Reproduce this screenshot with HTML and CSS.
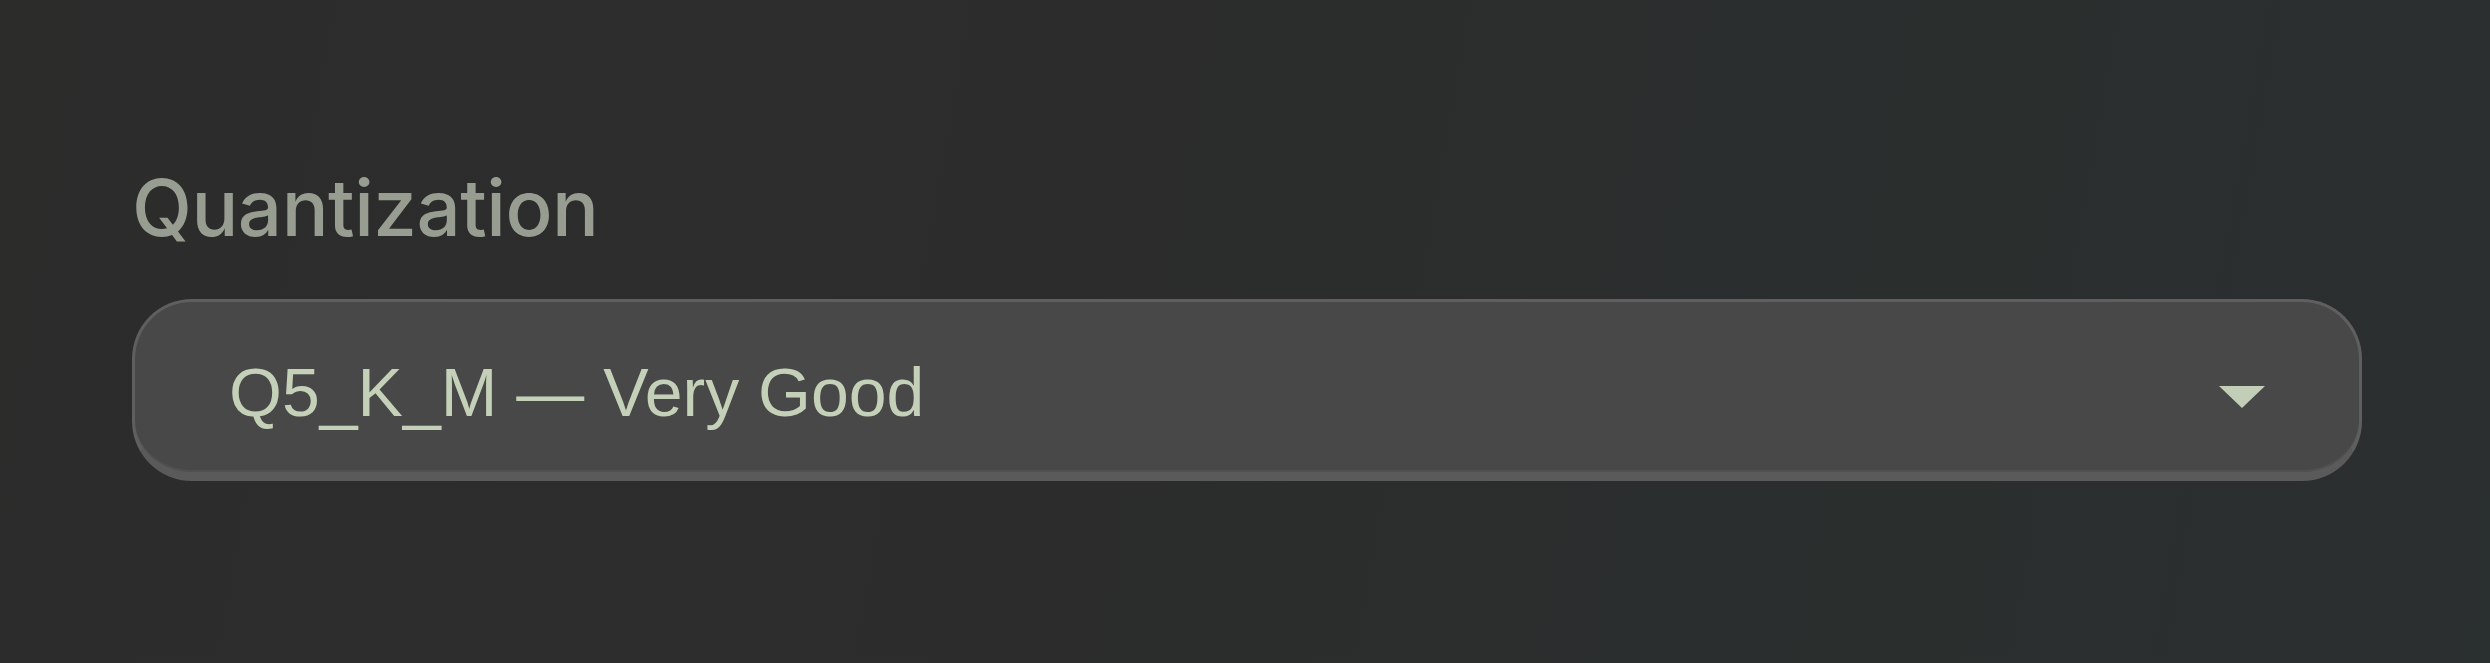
FILE: index.html
```html
<!DOCTYPE html>
<html lang="en">
<head>
  <meta charset="UTF-8" />
  <title>Quantization</title>
  <link rel="stylesheet" href="styles.css">
</head>
<body>
  <div class="field">
    <label class="field-label" for="quant">Quantization</label>
    <div class="select">
      <span class="select-value" id="quant">Q5_K_M — Very Good</span>
      <svg class="select-arrow" viewBox="0 0 46 22" width="46" height="22">
        <path d="M0 0 H46 L23 22 Z" fill="#c3ceb8"/>
      </svg>
    </div>
  </div>
</body>
</html>
```

FILE: styles.css
```css
html, body {
  height: 100%;
}

body {
  margin: 0;
  background: linear-gradient(100deg, #2c2c2b 0%, #2b2d2c 50%, #2a2f2f 100%);
  font-family: "Liberation Sans", Arial, sans-serif;
}

.field {
  padding: 160px 128px 0 132px;
  display: flex;
  flex-direction: column;
  gap: 43px;
}

.field-label {
  font-family: Inter, "Noto Sans", sans-serif;
  font-size: 78px;
  font-weight: 500;
  line-height: 96px;
  color: #979d90;
  letter-spacing: -0.5px;
}

.select {
  height: 182px;
  box-sizing: border-box;
  border: 3px solid #5f5f5f;
  border-bottom: 9px solid #5a5a5a;
  border-radius: 60px;
  background: #484848;
  box-shadow: inset 0 -2px 0 #505050;
  display: flex;
  align-items: center;
  justify-content: space-between;
  padding: 9px 94px 0 94px;
}

.select-value {
  font-size: 68px;
  color: #c5d0b9;
}

.select-arrow {
  display: block;
  margin-top: 11px;
}
```
